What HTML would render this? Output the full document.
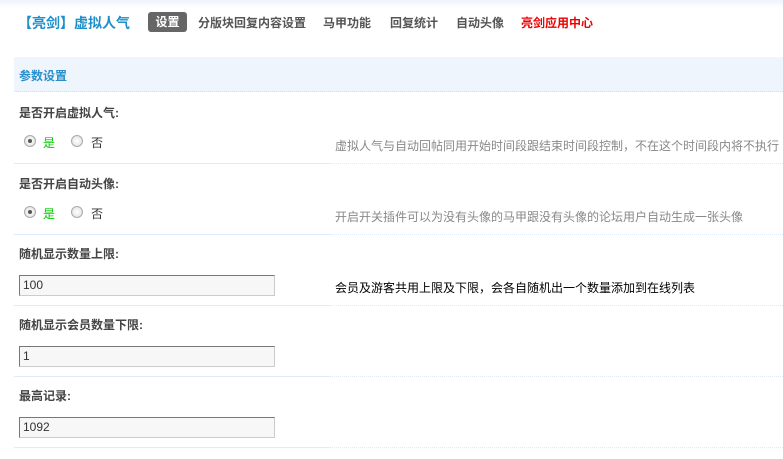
<!DOCTYPE html>
<html><head><meta charset="utf-8"><style>
*{margin:0;padding:0;box-sizing:border-box}
body{width:783px;height:459px;overflow:hidden;background:#fff;font-family:"Liberation Sans","Noto Sans CJK SC",sans-serif;font-size:12px;color:#333;position:relative}
.a{position:absolute;white-space:nowrap}
.top{left:0;top:0;width:783px;height:8px;background:linear-gradient(#eef3fa,#fff)}
.title{left:18px;top:13px;font-size:14px;color:#1e8fc9;font-weight:bold}
.nav{top:14px;font-size:12px;font-weight:bold;color:#555}
.cur{left:148px;top:12px;width:39px;height:20px;background:#666;color:#fff;border-radius:3px;text-align:center;line-height:20px;font-weight:bold}
.sec{left:14px;top:57px;width:769px;height:35px;background:#eef5fd;border-bottom:1px dotted #cde0f5;color:#2a8fc9;font-weight:bold;padding:10px 0 0 5px}
.lbl{left:19px;font-weight:bold;color:#444}
.hr{left:14px;width:316px;height:1px;background:#deebf8}
.hd{left:330px;width:453px;height:0;border-top:1px dotted #deebf8}
.rad{width:12px;height:12px;border-radius:50%;border:1px solid #aaa;background:radial-gradient(#fff,#ddd)}
.rad.on:after{content:"";position:absolute;left:3px;top:3px;width:4px;height:4px;border-radius:50%;background:#555}
.inp{left:19px;width:256px;height:21px;border:1px solid #777;border-right-color:#ccc;border-bottom-color:#ccc;background:#f7f7f7;padding:2px 0 0 3px;font-size:12px;color:#333}
.tip{color:#888;left:335px}
</style></head><body>
<div class="a top"></div>
<div class="a title">【亮剑】虚拟人气</div>
<div class="a cur">设置</div>
<div class="a nav" style="left:198px">分版块回复内容设置</div>
<div class="a nav" style="left:323px">马甲功能</div>
<div class="a nav" style="left:390px">回复统计</div>
<div class="a nav" style="left:456px">自动头像</div>
<div class="a nav" style="left:521px;color:#e00">亮剑应用中心</div>
<div class="a sec">参数设置</div>

<div class="a lbl" style="top:104px">是否开启虚拟人气:</div>
<div class="a rad on" style="left:24px;top:135px"></div><div class="a" style="left:43px;top:134px;color:#0c0">是</div>
<div class="a rad" style="left:71px;top:135px"></div><div class="a" style="left:91px;top:134px">否</div>
<div class="a tip" style="top:137px">虚拟人气与自动回帖同用开始时间段跟结束时间段控制，不在这个时间段内将不执行</div>
<div class="a hr" style="top:163px"></div><div class="a hd" style="top:163px"></div>

<div class="a lbl" style="top:175px">是否开启自动头像:</div>
<div class="a rad on" style="left:24px;top:206px"></div><div class="a" style="left:43px;top:205px;color:#0c0">是</div>
<div class="a rad" style="left:71px;top:206px"></div><div class="a" style="left:91px;top:205px">否</div>
<div class="a tip" style="top:208px">开启开关插件可以为没有头像的马甲跟没有头像的论坛用户自动生成一张头像</div>
<div class="a hr" style="top:234px"></div><div class="a hd" style="top:234px"></div>

<div class="a lbl" style="top:245px">随机显示数量上限:</div>
<div class="a inp" style="top:275px">100</div>
<div class="a" style="left:335px;top:279px;color:#000">会员及游客共用上限及下限，会各自随机出一个数量添加到在线列表</div>
<div class="a hr" style="top:305px"></div><div class="a hd" style="top:305px"></div>

<div class="a lbl" style="top:316px">随机显示会员数量下限:</div>
<div class="a inp" style="top:346px">1</div>
<div class="a hr" style="top:376px"></div><div class="a hd" style="top:376px"></div>

<div class="a lbl" style="top:387px">最高记录:</div>
<div class="a inp" style="top:417px">1092</div>
<div class="a hr" style="top:447px"></div><div class="a hd" style="top:447px"></div>
</body></html>
